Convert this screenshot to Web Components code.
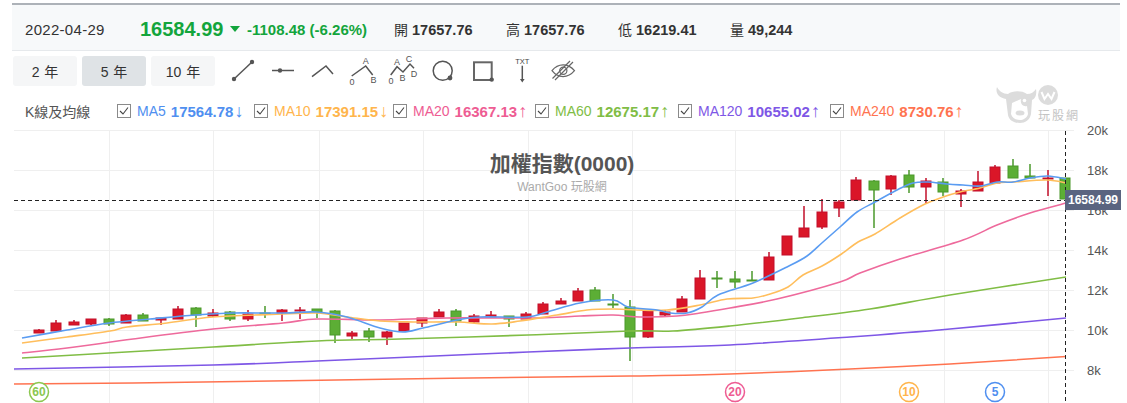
<!DOCTYPE html>
<html lang="zh-Hant">
<head>
<meta charset="utf-8">
<title>加權指數</title>
<style>
  body { margin: 0; background: #fff; font-family: "Liberation Sans", "Noto Sans CJK TC", sans-serif; }
</style>
</head>
<body>
<wg-app>
  <wg-header date="2022-04-29" price="16584.99" change="-1108.48 (-6.26%)">
    <wg-quote label="開">17657.76</wg-quote>
    <wg-quote label="高">17657.76</wg-quote>
    <wg-quote label="低">16219.41</wg-quote>
    <wg-quote label="量">49,244</wg-quote>
  </wg-header>
  <wg-toolbar>
    <wg-button>2 年</wg-button>
    <wg-button active>5 年</wg-button>
    <wg-button>10 年</wg-button>
    <wg-tool-icons slot="tools"></wg-tool-icons>
  </wg-toolbar>
  <wg-legend title-text="K線及均線">
    <wg-ma color="#4f8ff0" name="MA5" value="17564.78" arrow="↓" width="137"></wg-ma>
    <wg-ma color="#ffb54c" name="MA10" value="17391.15" arrow="↓" width="139"></wg-ma>
    <wg-ma color="#ee5c93" name="MA20" value="16367.13" arrow="↑" width="142"></wg-ma>
    <wg-ma color="#80bd45" name="MA60" value="12675.17" arrow="↑" width="143"></wg-ma>
    <wg-ma color="#7e57e6" name="MA120" value="10655.02" arrow="↑" width="152"></wg-ma>
    <wg-ma color="#ff7350" name="MA240" value="8730.76" arrow="↑" width="140"></wg-ma>
  </wg-legend>
  <wg-logo></wg-logo>
  <wg-chart></wg-chart>
</wg-app>

<script>
class WgApp extends HTMLElement {
  constructor() {
    super();
    this.attachShadow({ mode: "open" }).innerHTML = `
<style>
:host { display: block; position: relative; width: 1127px; height: 403px; overflow: hidden; color: #333; }
</style>
<slot></slot>`;
  }
}

class WgHeader extends HTMLElement {
  constructor() {
    super();
    this.attachShadow({ mode: "open" }).innerHTML = `
<style>
:host {
  display: flex; align-items: center; box-sizing: border-box;
  margin: 3px 7px 0 12px; height: 48px; padding: 3px 0 0 13px;
  background: #f7f9fa; border-top: 2px solid #adb2b8; border-bottom: 1px solid #e6e9ec;
  font-size: 15px;
}
.date { width: 115px; color: #333; letter-spacing: .3px; }
.price { width: 90px; font-size: 20px; font-weight: bold; color: #13a53c; }
.tri { width: 0; height: 0; border: 5px solid transparent; border-top: 6px solid #13a53c; border-bottom: 0; margin-right: 7px; }
.change { width: 147px; font-weight: bold; color: #13a53c; }
</style>
<span class="date"></span><span class="price"></span><span class="tri"></span><span class="change"></span>
<slot></slot>`;
  }
  connectedCallback() {
    this.shadowRoot.querySelector(".date").textContent = this.getAttribute("date");
    this.shadowRoot.querySelector(".price").textContent = this.getAttribute("price");
    this.shadowRoot.querySelector(".change").textContent = this.getAttribute("change");
  }
}

class WgQuote extends HTMLElement {
  constructor() {
    super();
    this.attachShadow({ mode: "open" }).innerHTML = `
<style>
:host { display: block; width: 112px; font-size: 14.5px; font-weight: bold; color: #333; white-space: nowrap; }
span { font-weight: normal; font-size: 14px; }
</style>
<span></span> <slot></slot>`;
  }
  connectedCallback() {
    this.shadowRoot.querySelector("span").textContent = this.getAttribute("label");
  }
}

class WgToolbar extends HTMLElement {
  constructor() {
    super();
    this.attachShadow({ mode: "open" }).innerHTML = `
<style>
:host { display: flex; align-items: center; gap: 5px; margin: 5px 0 0 13px; height: 30px; }
</style>
<slot></slot><slot name="tools"></slot>`;
  }
}

class WgButton extends HTMLElement {
  constructor() {
    super();
    this.attachShadow({ mode: "open" }).innerHTML = `
<style>
:host {
  display: flex; align-items: center; justify-content: center;
  width: 64px; height: 30px; border-radius: 3px;
  background: #f5f6f7; font-size: 14px; color: #333; word-spacing: 1px;
}
:host([active]) { background: #dfe3e6; }
</style>
<slot></slot>`;
  }
}

class WgToolIcons extends HTMLElement {
  constructor() {
    super();
    const line = 'fill="none" stroke="#555" stroke-width="1.5"';
    const label = 'font-family="Liberation Sans" font-size="9" fill="#555" text-anchor="middle"';
    const icons = [
      `<path d="M11 28 29 11" ${line}/><circle cx="11" cy="28" r="2.2" fill="#555"/><circle cx="29" cy="11" r="2.2" fill="#555"/>`,
      `<path d="M9 19.5H31" ${line}/><circle cx="17" cy="19.5" r="2.2" fill="#555"/>`,
      `<path d="M9 25.7 23 15 30 23" ${line}/>`,
      `<path d="M8.7 25 22.7 15 29.7 24" ${line}/><text x="22.7" y="13" ${label}>A</text><text x="9" y="34" ${label}>0</text><text x="30.5" y="32" ${label}>B</text>`,
      `<path d="M7.7 24 14 15.7 20 21 27 13 31 17.3" ${line}/><text x="8" y="33" ${label}>0</text><text x="14" y="14" ${label}>A</text><text x="19.5" y="30" ${label}>B</text><text x="26" y="11" ${label}>C</text><text x="31" y="25.5" ${label}>D</text>`,
      `<circle cx="19.7" cy="19.7" r="9.5" ${line}/><circle cx="27" cy="27" r="2.4" fill="#555"/>`,
      `<rect x="11" y="11.3" width="17.7" height="17.7" fill="none" stroke="#666" stroke-width="2"/><circle cx="28.7" cy="28.6" r="2.2" fill="#555"/>`,
      `<text x="19.3" y="12.5" font-family="Liberation Sans" font-size="7.5" fill="#444" text-anchor="middle">TXT</text><path d="M19.3 14.7V30" ${line}/><path d="M17 28H21.6L19.3 31.5Z" fill="#555"/>`,
      `<path d="M9 19.7C15 12 25 12 31.5 19.7 25 27.5 15 27.5 9 19.7Z" fill="none" stroke="#666" stroke-width="1.2"/><circle cx="20.3" cy="19.7" r="3.6" fill="none" stroke="#666" stroke-width="1.2"/><path d="M30 11 12 29M27 10 9.5 27.5" fill="none" stroke="#666" stroke-width="1.2"/>`,
    ];
    this.attachShadow({ mode: "open" }).innerHTML = `
<style>
:host { display: flex; margin-left: 3px; height: 40px; }
svg { display: block; width: 40px; height: 40px; flex: none; }
</style>
${icons.map((i) => `<svg viewBox="0 0 40 40">${i}</svg>`).join("")}`;
  }
}

class WgLegend extends HTMLElement {
  constructor() {
    super();
    this.attachShadow({ mode: "open" }).innerHTML = `
<style>
:host { display: flex; align-items: center; height: 24px; margin: 13px 0 1px 25px; font-size: 14px; }
.title { width: 92px; color: #555; white-space: nowrap; }
</style>
<span class="title"></span><slot></slot>`;
  }
  connectedCallback() {
    this.shadowRoot.querySelector(".title").textContent = this.getAttribute("title-text");
  }
}

class WgMa extends HTMLElement {
  constructor() {
    super();
    this.attachShadow({ mode: "open" }).innerHTML = `
<style>
:host { display: flex; align-items: center; height: 24px; font-size: 14px; white-space: nowrap; }
svg { width: 14px; height: 14px; margin-right: 6px; flex: none; }
b { margin-left: 5px; font-size: 15px; }
.arrow { font-size: 18px; line-height: 24px; margin-left: 1px; }
</style>
<svg viewBox="0 0 14 14"><rect x=".5" y=".5" width="13" height="13" fill="#fff" stroke="#8a8a8a"/><path d="M3 7 6 10 11 3.5" fill="none" stroke="#444" stroke-width="1.1"/></svg>
<span class="name"></span><b></b><span class="arrow"></span>`;
  }
  connectedCallback() {
    const root = this.shadowRoot;
    this.style.width = this.getAttribute("width") + "px";
    this.style.color = this.getAttribute("color");
    root.querySelector(".name").textContent = this.getAttribute("name");
    root.querySelector("b").textContent = this.getAttribute("value");
    root.querySelector(".arrow").textContent = this.getAttribute("arrow");
  }
}

class WgLogo extends HTMLElement {
  constructor() {
    super();
    this.attachShadow({ mode: "open" }).innerHTML = `
<style>
:host { position: absolute; left: 994px; top: 84px; width: 88px; height: 44px; }
svg { display: block; position: absolute; left: 0; top: 0; }
span { position: absolute; left: 44px; top: 23px; font-size: 12px; letter-spacing: 2px; color: #c4c4c4; white-space: nowrap; font-family: "Noto Sans CJK TC", sans-serif; line-height: 16px; }
</style>
<svg width="66" height="42" viewBox="0 0 66 42">
  <path d="M3 3C1 9 5 14 12 15L14 31C15 37 21 39 26 39 31 39 36 36 37 30L38 16C41 15 43 11 42 5 40 8 37 10 33 10 27 6 18 7 14 10 9 10 5 7 3 3Z" fill="#dcdcdc"/>
  <path d="M18 19 27 15C26 20 29 23 33 22L34 30C33 34 29 36 26 36 22 36 18 34 17 30Z" fill="#fff"/>
  <ellipse cx="26" cy="29" rx="4.500" ry="2.500" fill="#dcdcdc"/>
  <circle cx="30.500" cy="16.500" r="1.800" fill="#fff"/>
  <circle cx="54" cy="11" r="10" fill="#dcdcdc"/>
  <path d="M47.500 8 50.500 15 54 10 57.500 15 60.500 8" fill="none" stroke="#fff" stroke-width="2"/>
</svg>
<span>玩股網</span>`;
  }
}

// color, high, body top, body bottom, low (page y pixels, read off the picture)
const CANDLES = [
  ["r",329,330,333,333],["r",320,323,331,331],["r",320,322,325,325],["r",319,319,324,325],
  ["g",318,319,324,326],["r",314,315,323,323],["g",313,315,321,321],["r",318,318,320,325],
  ["r",306,309,319,319],["g",307,308,315,327],["r",309,313,316,317],["g",311,312,319,321],
  ["r",310,314,319,321],["g",306,313,314.500,318],["r",309,310,313,321],["r",307,310,311,319],
  ["g",309,309,312,318],["g",310,311,335,343],["r",331,333,336,339],["g",328,331,337,342],
  ["r",331,332,337,345],["r",323,323,331,331],["r",318,318,323,327],["r",309,312,317,317],
  ["g",309,311,321,326],["r",314,316,322,323],["r",311,315,317,317],["g",316,316,319,327],
  ["r",312,314,319,319],["r",302,304,314,314],["r",298,301,304,304],["r",288,291,301,301],
  ["g",287,290,301,301],["g",294,304,305,308],["g",300,307,337,361],["r",311,311,337,338],
  ["r",310,312,315,317],["r",296,299,312,312],["r",270,278,299,299],["g",271,278,279,288],
  ["g",271,279,282,288],["g",271,280,281,281],["r",252,257,280,280],["r",236,236,255,255],
  ["r",206,228,237,237],["r",199,212,227,229],["r",200,202,208,217],["r",177,180,200,200],
  ["g",180,181,190,228],["r",175,176,189,195],["g",170,175,187,193],["r",178,181,187,204],
  ["g",178,182,192,196],["r",189,191,194,207],["r",171,182,191,191],["r",165,167,183,183],
  ["g",159,166,178,178],["g",164,176,178,178],["r",170,178,179,196],["g",178,178,199,199],
];

const MA_LINES = [
  { color: "#ff7350", pts: [[14,384],[133,383],[400,379],[630,376],[730,374],[850,369],[950,364],[1066,356.500]] },
  { color: "#7e57e6", pts: [[14,369],[213,365],[317,361],[400,357.500],[528,352],[630,348],[730,345],[850,337],[950,329],[1066,318]] },
  { color: "#80bd45", pts: [[22,358],[109,353],[213,347],[317,341],[400,339],[528,335],[630,331],[673,331],[730,326],[800,318],[870,309],[950,295],[1066,277]] },
  { color: "#ee6a9c", pts: [[22,353],[67,348],[133,339],[213,329],[283,323],[317,319],[380,320],[447,318],[537,318],[580,316],[613,315],[640,317],[677,316],[700,313],[730,308],[777,299],[840,282],[860,273],[900,259],[963,240],[997,225],[1030,213],[1066,203]] },
  { color: "#ffbe5c", pts: [[22,343],[67,337],[110,331],[127,327],[167,323],[213,317],[283,314],[317,313],[347,317],[380,321],[413,322],[457,322],[492,324],[520,321],[557,315],[587,310],[613,309],[637,310],[667,310],[700,305],[727,299],[753,298],[770,294],[788,287],[803,275],[822,266],[840,255],[858,242],[875,234],[900,218],[925,204],[943,197],[960,192],[980,188],[997,183],[1013,182],[1047,180],[1066,183]] },
  { color: "#5a9cf2", pts: [[22,338],[67,330],[109,323],[150,319],[195,315],[233,313],[283,313],[317,312],[347,317],[380,328],[403,332],[423,328],[457,320],[480,317],[527,317],[547,312],[580,303],[613,300],[628,307],[657,310],[670,313],[687,313],[702,307],[718,295],[753,283],[787,267],[807,256],[823,242],[840,227],[857,212],[875,202],[897,190],[913,183],[928,182],[947,184],[963,185],[980,186],[997,182],[1013,182],[1030,178],[1048,176],[1066,179]] },
];

const GRID_X = [109, 213, 319, 423, 528, 632, 735, 840, 944, 1048];
const AXIS = [["20k",131],["18k",171],["16k",211],["14k",251],["12k",291],["10k",331],["8k",371]];
const MARKERS = [["60",39,"#8cc751"],["20",735,"#ee5c93"],["10",909,"#ffb54c"],["5",995,"#4f8ff0"]];

// catmull-rom through the points, so the averages bend like the chart lib draws them
function smooth(pts) {
  let d = `M${pts[0][0]} ${pts[0][1]}`;
  for (let i = 0; i < pts.length - 1; i++) {
    const p0 = pts[i - 1] || pts[i];
    const p1 = pts[i];
    const p2 = pts[i + 1];
    const p3 = pts[i + 2] || p2;
    const c1x = p1[0] + (p2[0] - p0[0]) / 6;
    const c1y = p1[1] + (p2[1] - p0[1]) / 6;
    const c2x = p2[0] - (p3[0] - p1[0]) / 6;
    const c2y = p2[1] - (p3[1] - p1[1]) / 6;
    d += `C${c1x.toFixed(1)} ${c1y.toFixed(1)} ${c2x.toFixed(1)} ${c2y.toFixed(1)} ${p2[0]} ${p2[1]}`;
  }
  return d;
}

class WgChart extends HTMLElement {
  constructor() {
    super();
    this.attachShadow({ mode: "open" }).innerHTML = `
<style>
:host { display: block; width: 1127px; height: 279px; }
svg { display: block; }
text { font-family: "Liberation Sans", "Noto Sans CJK TC", sans-serif; }
</style>
<svg width="1127" height="279" viewBox="0 124 1127 279">${this.draw()}</svg>`;
  }

  draw() {
    let out = "";
    for (const [, y] of AXIS) {
      out += `<path d="M14 ${y - 0.5}H1074" stroke="#efefef"/>`;
    }
    for (const x of GRID_X) {
      out += `<path d="M${x + 0.5} 131V403" stroke="#efefef"/>`;
    }
    out += `<text x="562" y="171" text-anchor="middle" font-size="21" font-weight="bold" fill="#555">加權指數(0000)</text>`;
    out += `<text x="562" y="191" text-anchor="middle" font-size="12" fill="#aaa">WantGoo 玩股網</text>`;
    CANDLES.forEach((c, i) => {
      const x = Math.round(39 + i * 17.39);
      const [fill, stroke] = c[0] === "r" ? ["#da1628", "#c20f2a"] : ["#5cae35", "#4a982b"];
      out += `<path d="M${x} ${c[1]}V${c[4]}" stroke="${stroke}" stroke-width="1.5"/>`;
      out += `<rect x="${x - 5}" y="${c[2]}" width="10" height="${c[3] - c[2]}" fill="${fill}" stroke="${stroke}"/>`;
    });
    for (const m of MA_LINES) {
      out += `<path d="${smooth(m.pts)}" fill="none" stroke="${m.color}" stroke-width="1.6"/>`;
    }
    out += `<path d="M14 200.500H1065" stroke="#222" stroke-dasharray="4 3"/>`;
    out += `<path d="M1065.500 131V403" stroke="#222" stroke-dasharray="4 3"/>`;
    for (const [t, y] of AXIS) {
      out += `<text x="1087" y="${y + 4}" font-size="13" fill="#555">${t}</text>`;
    }
    out += `<rect x="1065" y="190" width="56" height="20" fill="#5a6480"/>`;
    out += `<text x="1093" y="204" text-anchor="middle" font-size="12" font-weight="bold" fill="#fff">16584.99</text>`;
    for (const [t, x, color] of MARKERS) {
      out += `<circle cx="${x}" cy="392" r="9.500" fill="#fff" stroke="${color}" stroke-width="1.5"/>`;
      out += `<text x="${x}" y="396" text-anchor="middle" font-size="12" font-weight="bold" fill="${color}">${t}</text>`;
    }
    return out;
  }
}

customElements.define("wg-app", WgApp);
customElements.define("wg-header", WgHeader);
customElements.define("wg-quote", WgQuote);
customElements.define("wg-toolbar", WgToolbar);
customElements.define("wg-button", WgButton);
customElements.define("wg-tool-icons", WgToolIcons);
customElements.define("wg-legend", WgLegend);
customElements.define("wg-ma", WgMa);
customElements.define("wg-logo", WgLogo);
customElements.define("wg-chart", WgChart);
</script>
</body>
</html>
